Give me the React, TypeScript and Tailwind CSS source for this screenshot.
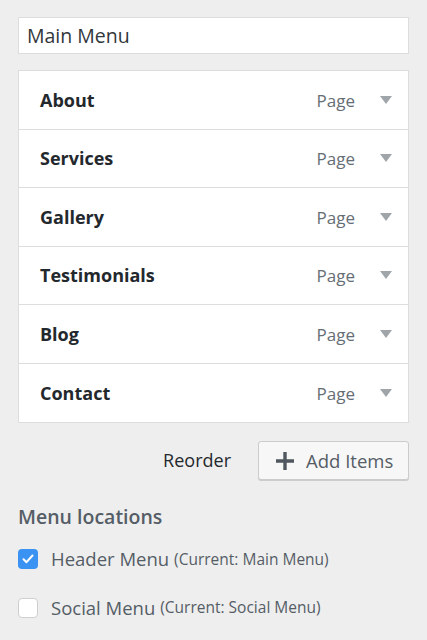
import React from "react";

const items = ["About", "Services", "Gallery", "Testimonials", "Blog", "Contact"];

const Caret = () => (
  <svg width="12" height="8" viewBox="0 0 12 8" className="ml-[25px] mr-[16px]">
    <path d="M0 0h12L6 8z" fill="#a0a5aa" />
  </svg>
);

export default function App() {
  return (
    <div
      className="min-h-[640px] bg-[#eeeeee] px-[18px] pt-[17px] text-[#555d66]"
      style={{ fontFamily: '"Open Sans", "Noto Sans", sans-serif' }}
    >
      <div className="flex h-[37px] items-center border border-[#dddddd] bg-white px-[8px] text-[19.5px] text-[#32373c]">
        Main Menu
      </div>

      <div className="mt-[16px] border border-[#dddddd] bg-white">
        {items.map((item, i) => (
          <div
            key={item}
            className={`flex h-[58.5px] items-center pl-[21px] ${i < items.length - 1 ? "border-b border-[#dddddd]" : ""}`}
          >
            <span className="flex-1 pt-[1px] text-[18px] font-bold text-[#23282d]">{item}</span>
            <span className="pt-[1px] text-[17px] text-[#666e75]">Page</span>
            <Caret />
          </div>
        ))}
      </div>

      <div className="mt-[18px] flex items-center justify-end">
        <span className="mr-[27px] text-[18px] text-[#23282d]">Reorder</span>
        <button className="flex h-[39px] w-[151px] items-center rounded-[3px] border border-[#cccccc] bg-[#f7f7f7] pl-[17px] text-[18.5px] text-[#555d66] shadow-[0_1px_0_#cccccc]">
          <svg width="18" height="18" viewBox="0 0 18 18" className="mr-[12px]">
            <path d="M7.3 0h3.4v7.3H18v3.4h-7.3V18H7.3v-7.3H0V7.3h7.3z" fill="#50575e" />
          </svg>
          Add Items
        </button>
      </div>

      <div className="mt-[22px] text-[19.5px] font-semibold text-[#555d66]">Menu locations</div>

      <label className="mt-[14px] flex items-center">
        <span className="flex h-[20px] w-[20px] items-center justify-center rounded-[4px] bg-[#3a92f2]">
          <svg width="12" height="10" viewBox="0 0 12 10">
            <path d="M1.5 5.2 4.5 8.2 10.5 1.5" fill="none" stroke="white" strokeWidth="2" strokeLinecap="round" strokeLinejoin="round" />
          </svg>
        </span>
        <span className="ml-[13px] text-[18.5px]">Header Menu</span>
        <span className="ml-[5px] text-[15.5px]">(Current: Main Menu)</span>
      </label>

      <label className="mt-[21px] flex items-center">
        <span className="h-[20px] w-[20px] rounded-[4px] border border-[#cfcfcf] bg-white" />
        <span className="ml-[13px] text-[18.5px]">Social Menu</span>
        <span className="ml-[5px] text-[15.5px]">(Current: Social Menu)</span>
      </label>
    </div>
  );
}
